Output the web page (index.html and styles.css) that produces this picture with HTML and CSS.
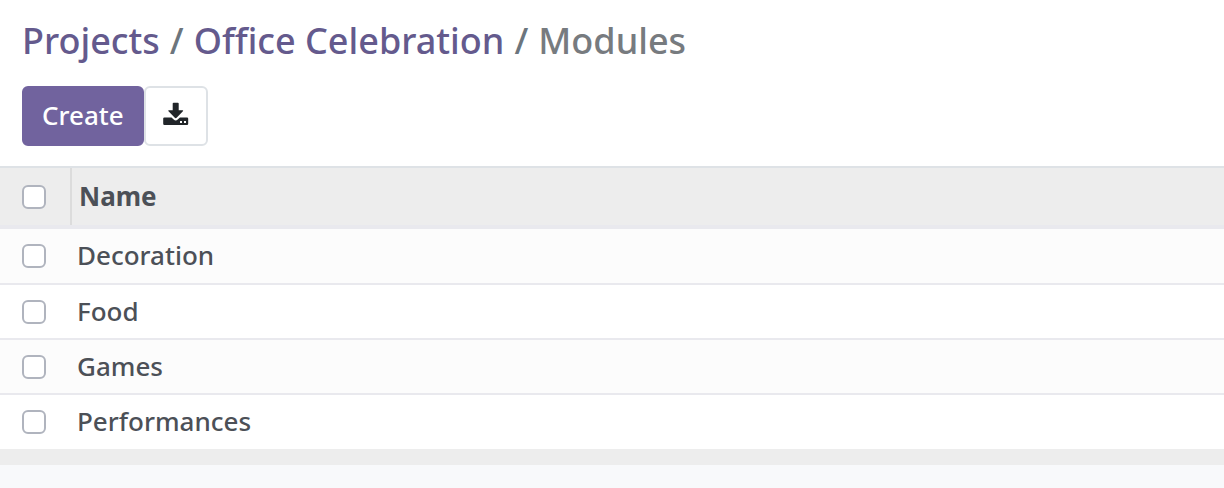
FILE: index.html
```html
<!DOCTYPE html>
<html lang="en">
<head>
<meta charset="utf-8">
<meta name="viewport" content="width=device-width, initial-scale=1">
<title>Modules</title>
<link rel="stylesheet" href="styles.css">
</head>
<body>
<header class="control-panel">
  <nav aria-label="Breadcrumb">
    <ol class="breadcrumb">
      <li class="crumb"><a href="#projects">Projects</a></li>
      <li class="crumb"><a href="#office">Office Celebration</a></li>
      <li class="crumb" aria-current="page">Modules</li>
    </ol>
  </nav>
  <div class="buttons">
    <button class="btn btn-primary" type="button">Create</button>
    <button class="btn btn-export" type="button" aria-label="Export all">
      <svg class="icon" viewBox="0 0 26 24" aria-hidden="true">
        <path d="M10.600 0.700h4.200q.900 0 .900.900V8.200h3.700q1.400 0 .5 1l-6.300 6.500q-.9.900-1.800 0L5.500 9.200q-.9-1 .5-1h3.700V1.600q0-.9.900-.9Z"/>
        <path fill-rule="evenodd" d="M1.400 15.400h7.100l2.200 2.200q2 1.800 4 0l2.200-2.200h7.100q1.200 0 1.200 1.200v5.200q0 1.200-1.200 1.200H1.400Q.2 23 .2 21.800v-5.200q0-1.200 1.200-1.200ZM17 19v2h2v-2ZM21 19v2h2v-2Z"/>
      </svg>
    </button>
  </div>
</header>
<main>
  <table class="list">
    <thead>
      <tr>
        <th class="select"><input class="check" type="checkbox" aria-label="Select all"></th>
        <th class="name" scope="col">Name</th>
      </tr>
    </thead>
    <tbody>
      <tr>
        <td class="select"><input class="check" type="checkbox" aria-labelledby="m1"></td>
        <td class="name" id="m1">Decoration</td>
      </tr>
      <tr>
        <td class="select"><input class="check" type="checkbox" aria-labelledby="m2"></td>
        <td class="name" id="m2">Food</td>
      </tr>
      <tr>
        <td class="select"><input class="check" type="checkbox" aria-labelledby="m3"></td>
        <td class="name" id="m3">Games</td>
      </tr>
      <tr>
        <td class="select"><input class="check" type="checkbox" aria-labelledby="m4"></td>
        <td class="name" id="m4">Performances</td>
      </tr>
    </tbody>
    <tfoot>
      <tr><td class="foot" colspan="2"></td></tr>
    </tfoot>
  </table>
</main>
</body>
</html>
```

FILE: styles.css
```css
* { box-sizing: border-box; }

body {
  margin: 0;
  background: #f8f9fb;
  color: #4c5057;
  font-family: "Noto Sans", "Open Sans", sans-serif;
  font-size: 26px;
  font-weight: 500;
  line-height: 36px;
}

.control-panel {
  display: flex;
  flex-direction: column;
  gap: 20px;
  padding: 16px 22px 20px;
  background: #fff;
  border-bottom: 2px solid #dee2e6;
}

.breadcrumb {
  display: flex;
  flex-wrap: wrap;
  margin: 0;
  padding: 0;
  list-style: none;
  color: #777b7f;
  font-size: 36px;
  line-height: 50px;
}

.crumb + .crumb::before {
  content: "/";
  padding: 0 10px;
  color: #6c757d;
}

.crumb a {
  color: #645a8d;
  text-decoration: none;
}

.buttons { display: flex; }

.btn {
  display: flex;
  align-items: center;
  height: 60px;
  padding: 0 18px 2px;
  border: 2px solid #71639e;
  border-radius: 6px;
  font: inherit;
}

.btn-primary {
  background: #71639e;
  color: #fff;
}

.btn-export {
  padding: 0 17px 4px;
  background: #fff;
  border-color: #dee2e6;
  color: #212529;
}

.icon {
  width: 26px;
  height: 24px;
  fill: currentColor;
}

.list {
  width: 100%;
  border-collapse: separate;
  border-spacing: 0;
}

.list th,
.list td {
  height: 55px;
  padding: 0;
  text-align: left;
  vertical-align: middle;
  border-bottom: 2px solid #e9e9ee;
}

.list thead th {
  height: 61px;
  background: #ededed;
  border-bottom: 4px solid #e9e9ee;
}

.list tbody tr { background: #fff; }
.list tbody tr:nth-child(odd) { background: #fcfcfc; }
.list tbody tr:first-child td { height: 56px; }
.list tbody tr:last-child td {
  height: 54px;
  border-bottom: 0;
}

.list .select {
  width: 72px;
  padding-left: 22px;
}

.list thead .select {
  background: linear-gradient(#dcdcdc, #dcdcdc) right / 2px 100% no-repeat #ededed;
}

.list .name {
  padding-bottom: 2px;
  padding-left: 5px;
}

.list thead .name { padding-left: 7px; }

.list .foot {
  height: 16px;
  background: #ededed;
  border: 0;
}

.check {
  display: block;
  width: 24px;
  height: 24px;
  margin: 0;
  appearance: none;
  background: #fff;
  border: 2px solid #b0b4be;
  border-radius: 6px;
}

.check:checked { background: #71639e; }
```
